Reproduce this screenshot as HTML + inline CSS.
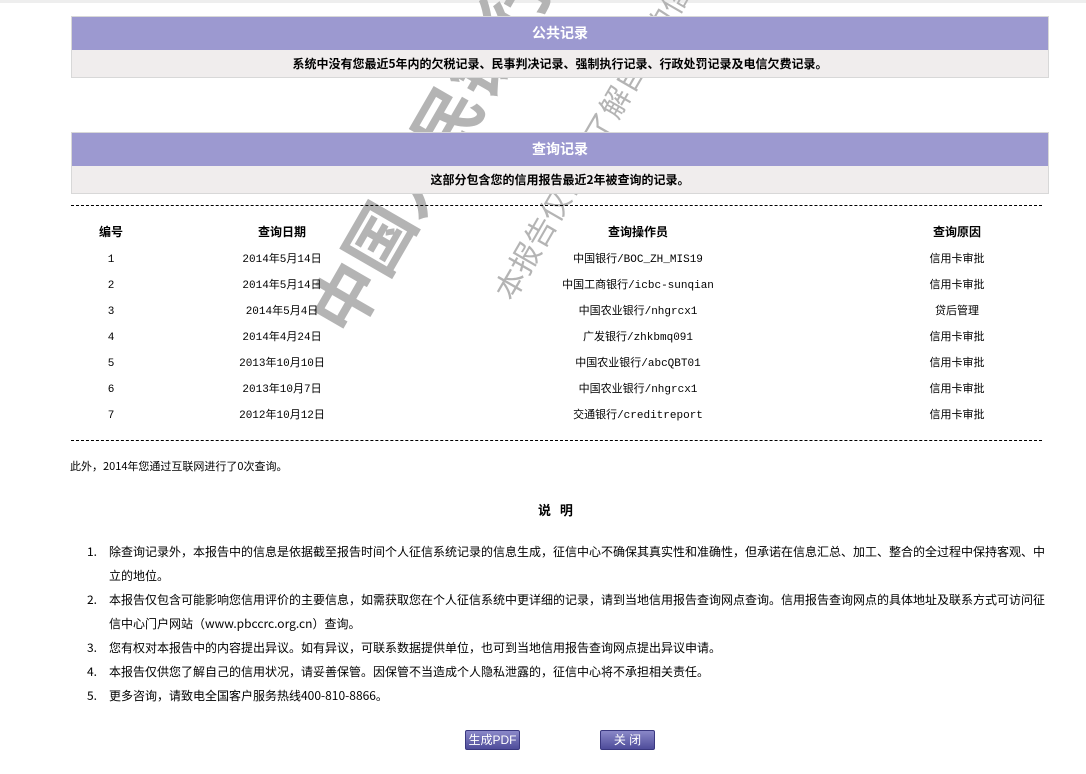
<!DOCTYPE html>
<html><head><meta charset="utf-8"><style>
body{margin:0;width:1086px;height:774px;background:#fff;font-family:"Liberation Serif","Noto Serif CJK SC","WenQuanYi Zen Hei",serif;font-size:12px;color:#000;position:relative;overflow:hidden}
.topbar{position:absolute;left:0;top:0;width:1086px;height:3px;background:#eee}
.wm{position:absolute;color:#b4b4b4;white-space:nowrap;transform-origin:0 0;font-family:"WenQuanYi Zen Hei","Noto Sans CJK SC",sans-serif;z-index:0}
.box{position:absolute;left:71px;width:976px;border:1px solid #d8d8d8;background:#f0eded;z-index:2}
.box .h{background:#9c99d0;color:#fff;text-align:center;font-weight:bold;font-size:14px;height:33px;line-height:33px;font-family:"WenQuanYi Zen Hei","Noto Sans CJK SC",sans-serif}
.box .b{text-align:center;font-weight:bold;height:27px;line-height:27px;font-family:"WenQuanYi Zen Hei","Noto Sans CJK SC",sans-serif}
.dash{position:absolute;left:71px;width:971px;border-top:1px dashed #000;z-index:2}
.t{position:absolute;z-index:2;text-align:center;font-size:11px;line-height:14px;height:14px;font-family:"Liberation Mono","WenQuanYi Zen Hei",monospace}
.th{font-weight:bold;font-size:12px;font-family:"WenQuanYi Zen Hei","Noto Sans CJK SC",sans-serif}
.txt{position:absolute;z-index:2;font-family:"WenQuanYi Zen Hei","Noto Sans CJK SC",sans-serif;font-size:12px}
.btn{position:absolute;z-index:2;height:18px;line-height:18px;color:#fff;font-size:12px;text-align:center;background:linear-gradient(#8a88c8,#4e4c9a);border:1px solid #3a3880;border-radius:2px;font-family:"Liberation Sans","WenQuanYi Zen Hei",sans-serif}
</style></head><body>
<div class="topbar"></div>
<div class="wm" style="left:282px;top:300px;font-size:68px;font-weight:bold;transform:rotate(-60deg)">中国人民银行</div>
<div class="wm" style="left:482px;top:285px;font-size:30px;transform:rotate(-60deg)">本报告仅供您了解自己的信用</div>

<div class="box" style="top:16px"><div class="h">公共记录</div><div class="b">系统中没有您最近5年内的欠税记录、民事判决记录、强制执行记录、行政处罚记录及电信欠费记录。</div></div>
<div class="box" style="top:132px"><div class="h">查询记录</div><div class="b">这部分包含您的信用报告最近2年被查询的记录。</div></div>

<div class="dash" style="top:205px"></div>
<div class="dash" style="top:440px"></div>

<div class="t th" style="left:71px;width:80px;top:225px">编号</div>
<div class="t th" style="left:202px;width:160px;top:225px">查询日期</div>
<div class="t th" style="left:518px;width:240px;top:225px">查询操作员</div>
<div class="t th" style="left:897px;width:120px;top:225px">查询原因</div>

<div class="t" style="left:71px;width:80px;top:253px">1</div><div class="t" style="left:202px;width:160px;top:253px">2014年5月14日</div><div class="t" style="left:518px;width:240px;top:253px">中国银行/BOC_ZH_MIS19</div><div class="t" style="left:897px;width:120px;top:253px">信用卡审批</div>
<div class="t" style="left:71px;width:80px;top:279px">2</div><div class="t" style="left:202px;width:160px;top:279px">2014年5月14日</div><div class="t" style="left:518px;width:240px;top:279px">中国工商银行/icbc-sunqian</div><div class="t" style="left:897px;width:120px;top:279px">信用卡审批</div>
<div class="t" style="left:71px;width:80px;top:305px">3</div><div class="t" style="left:202px;width:160px;top:305px">2014年5月4日</div><div class="t" style="left:518px;width:240px;top:305px">中国农业银行/nhgrcx1</div><div class="t" style="left:897px;width:120px;top:305px">贷后管理</div>
<div class="t" style="left:71px;width:80px;top:331px">4</div><div class="t" style="left:202px;width:160px;top:331px">2014年4月24日</div><div class="t" style="left:518px;width:240px;top:331px">广发银行/zhkbmq091</div><div class="t" style="left:897px;width:120px;top:331px">信用卡审批</div>
<div class="t" style="left:71px;width:80px;top:357px">5</div><div class="t" style="left:202px;width:160px;top:357px">2013年10月10日</div><div class="t" style="left:518px;width:240px;top:357px">中国农业银行/abcQBT01</div><div class="t" style="left:897px;width:120px;top:357px">信用卡审批</div>
<div class="t" style="left:71px;width:80px;top:383px">6</div><div class="t" style="left:202px;width:160px;top:383px">2013年10月7日</div><div class="t" style="left:518px;width:240px;top:383px">中国农业银行/nhgrcx1</div><div class="t" style="left:897px;width:120px;top:383px">信用卡审批</div>
<div class="t" style="left:71px;width:80px;top:409px">7</div><div class="t" style="left:202px;width:160px;top:409px">2012年10月12日</div><div class="t" style="left:518px;width:240px;top:409px">交通银行/creditreport</div><div class="t" style="left:897px;width:120px;top:409px">信用卡审批</div>

<div class="txt" style="left:70px;top:458px;font-size:11px">此外，2014年您通过互联网进行了0次查询。</div>
<div class="txt" style="left:538px;top:500px;font-weight:bold;font-size:13px">说 &nbsp; 明</div>

<div class="txt" style="left:87px;top:540px;width:960px;line-height:24px">
<div style="position:relative;padding-left:22px">
<span style="position:absolute;left:0">1.</span>除查询记录外，本报告中的信息是依据截至报告时间个人征信系统记录的信息生成，征信中心不确保其真实性和准确性，但承诺在信息汇总、加工、整合的全过程中保持客观、中立的地位。</div>
<div style="position:relative;padding-left:22px"><span style="position:absolute;left:0">2.</span>本报告仅包含可能影响您信用评价的主要信息，如需获取您在个人征信系统中更详细的记录，请到当地信用报告查询网点查询。信用报告查询网点的具体地址及联系方式可访问征信中心门户网站（www.pbccrc.org.cn）查询。</div>
<div style="position:relative;padding-left:22px"><span style="position:absolute;left:0">3.</span>您有权对本报告中的内容提出异议。如有异议，可联系数据提供单位，也可到当地信用报告查询网点提出异议申请。</div>
<div style="position:relative;padding-left:22px"><span style="position:absolute;left:0">4.</span>本报告仅供您了解自己的信用状况，请妥善保管。因保管不当造成个人隐私泄露的，征信中心将不承担相关责任。</div>
<div style="position:relative;padding-left:22px"><span style="position:absolute;left:0">5.</span>更多咨询，请致电全国客户服务热线400-810-8866。</div>
</div>

<div class="btn" style="left:465px;top:730px;width:53px">生成PDF</div>
<div class="btn" style="left:600px;top:730px;width:53px">关 闭</div>
</body></html>
